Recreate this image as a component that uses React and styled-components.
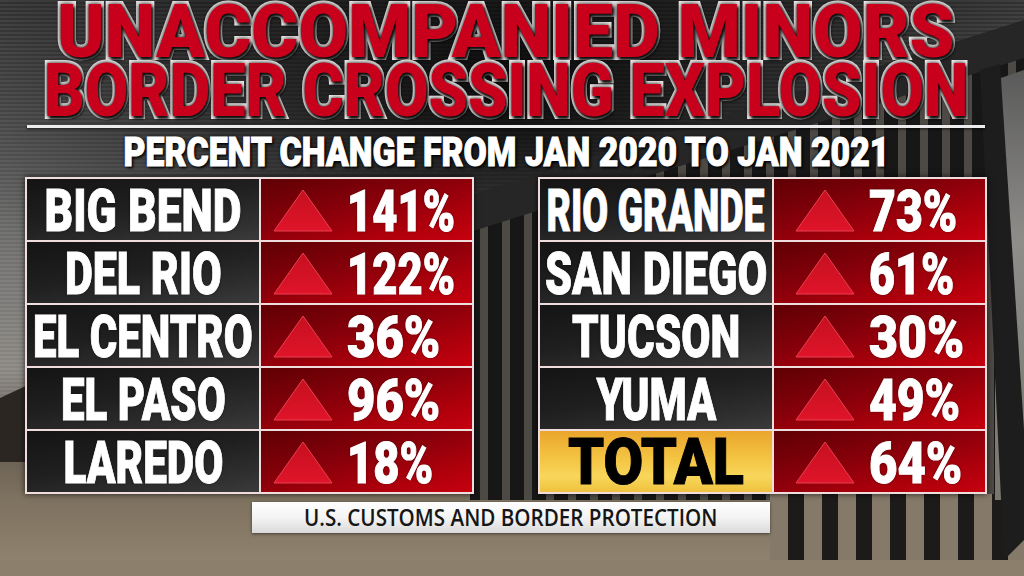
import React, { useLayoutEffect, useRef, useState } from 'react'
import styled, { createGlobalStyle } from 'styled-components'

const HEAVY = `Roboto, Inter, Lato, "DejaVu Sans", sans-serif`

const GlobalStyle = createGlobalStyle`
    html, body {
    margin: 0;
    padding: 0;
    background: #000;
    }

    body {
    width: 1024px;
    height: 576px;
    overflow: hidden;
    }
`

// widths are the pixel widths the broadcast squeezed each label into
const LEFT_ROWS = [
    { name: 'BIG BEND', nameWidth: 197, value: '141%', valueWidth: 108 },
    { name: 'DEL RIO', nameWidth: 157, value: '122%', valueWidth: 108 },
    { name: 'EL CENTRO', nameWidth: 220, value: '36%', valueWidth: 93 },
    { name: 'EL PASO', nameWidth: 165, value: '96%', valueWidth: 93 },
    { name: 'LAREDO', nameWidth: 160, value: '18%', valueWidth: 86 }
]

const RIGHT_ROWS = [
    { name: 'RIO GRANDE', nameWidth: 218, value: '73%', valueWidth: 88 },
    { name: 'SAN DIEGO', nameWidth: 222, value: '61%', valueWidth: 85 },
    { name: 'TUCSON', nameWidth: 168, value: '30%', valueWidth: 95 },
    { name: 'YUMA', nameWidth: 120, value: '49%', valueWidth: 91 },
    { name: 'TOTAL', nameWidth: 176, value: '64%', valueWidth: 93, total: true }
]

const Stage = styled.div`
    position: relative;
    width: 1024px;
    height: 576px;
    overflow: hidden;
    font-family: ${ HEAVY };
    font-weight: 900;
`

const Backdrop = styled.svg`
    position: absolute;
    inset: 0;
    width: 100%;
    height: 100%;
`

const Content = styled.div`
    position: relative;
    display: flex;
    flex-direction: column;
    width: 962px;
    margin-left: 25px;
    padding-top: 2px;
`

const FitText = styled.span`
    display: inline-block;
    white-space: nowrap;
    transform-origin: ${ p => p.$origin || 'center' };
`

const Fit = ({ width, sy = 1, origin, children }) => {
    const ref = useRef(null)
    const [sx, setSx] = useState(1)

    useLayoutEffect(() => {
        const measure = () => {
            const natural = ref.current && ref.current.offsetWidth
            if (natural) setSx(width / natural)
        }
        measure()
        if (document.fonts) document.fonts.ready.then(measure)
    }, [width])

    return (
        <FitText
            ref={ ref }
            $origin={ origin }
            style={ { transform: `scale(${ sx }, ${ sy })` } }>
            { children }
        </FitText>
    )
}

const TitleLine = styled.div`
    display: flex;
    justify-content: center;
    height: 59px;
    line-height: 59px;
    font-size: 74px;
    color: #c9001b;
    -webkit-text-stroke: 6px #f4eeee;
    paint-order: stroke fill;
    text-shadow: 0 0 5px #000, 2px 3px 3px rgba(0, 0, 0, 0.9);
`

const Rule = styled.div`
    width: 958px;
    height: 3px;
    margin: 5px 0 0 2px;
    background: #ececec;
    box-shadow: 0 1px 3px rgba(0, 0, 0, 0.7);
`

const Subtitle = styled.div`
    display: flex;
    justify-content: center;
    height: 48px;
    line-height: 48px;
    font-size: 41px;
    color: #fff;
    -webkit-text-stroke: 1px #fff;
    text-shadow: 0 0 4px #000, 2px 2px 3px #000;
`

const Tables = styled.div`
    display: flex;
    justify-content: space-between;
    margin-top: 1px;
`

const Table = styled.div`
    display: grid;
    grid-template-columns: 232px 211px;
    grid-auto-rows: 61px;
    gap: 2px;
    padding: 2px;
    background: #efdcdc;
    box-shadow: 0 0 6px rgba(0, 0, 0, 0.7);
`

const NameCell = styled.div`
    display: flex;
    align-items: center;
    justify-content: center;
    overflow: hidden;
    padding-top: 2px;
    line-height: 58px;
    font-size: ${ p => p.$total ? '64px' : '60px' };
    color: ${ p => p.$total ? '#000' : '#fff' };
    -webkit-text-stroke: 1px currentColor;
    text-shadow: ${ p => p.$total ? 'none' : '0 0 3px rgba(0, 0, 0, 0.8)' };
    background: ${ p => p.$total
        ? 'linear-gradient(180deg, #e9a62c 0%, #f4c443 45%, #f8d65a 75%, #efc13e 100%)'
        : 'linear-gradient(170deg, #141414 0%, #1f1f1f 45%, #2f2f2f 80%, #3b3b3b 100%)' };
`

const ValueCell = styled.div`
    display: flex;
    align-items: center;
    gap: 14px;
    padding: 2px 0 0 ${ p => p.$pad }px;
    overflow: hidden;
    line-height: 58px;
    font-size: 58px;
    color: #fff;
    -webkit-text-stroke: 1px #fff;
    text-shadow: 0 0 3px rgba(0, 0, 0, 0.6);
    background: linear-gradient(165deg, #5e0004 0%, #85000a 40%, #ad000c 75%, #c7000f 100%);
`

const Arrow = styled.svg`
    flex: none;
    width: 60px;
    height: 43px;
`

const Source = styled.div`
    display: flex;
    align-items: center;
    justify-content: center;
    width: 518px;
    height: 31px;
    margin: 8px 0 0 227px;
    background: linear-gradient(180deg, #ffffff 0%, #f4f4f4 50%, #d9d9d9 100%);
    box-shadow: 0 1px 3px rgba(0, 0, 0, 0.5);
    font-family: "Open Sans", "Liberation Sans", sans-serif;
    font-weight: 600;
    font-size: 23px;
    line-height: 31px;
    color: #161616;
`

const UpArrow = () => (
    <Arrow viewBox='0 0 60 43'>
        <defs>
            <linearGradient id='arrowFill' x1='0' y1='0' x2='0' y2='1'>
                <stop offset='0' stopColor='#c5101f' />
                <stop offset='1' stopColor='#e0142a' />
            </linearGradient>
        </defs>
        <polygon
            points='30,1 59,42 1,42'
            fill='url(#arrowFill)'
            stroke='#e8404e'
            strokeWidth='1' />
    </Arrow>
)

const Scene = () => (
    <Backdrop viewBox='0 0 1024 576' preserveAspectRatio='none'>
        <defs>
            <linearGradient id='sky' x1='0' y1='0' x2='0' y2='1'>
                <stop offset='0' stopColor='#333' />
                <stop offset='0.28' stopColor='#555' />
                <stop offset='0.45' stopColor='#727170' />
                <stop offset='0.64' stopColor='#8a8782' />
                <stop offset='0.76' stopColor='#625a4f' />
                <stop offset='0.86' stopColor='#7d715f' />
                <stop offset='1' stopColor='#938671' />
            </linearGradient>
            <pattern id='scan' width='4' height='4' patternUnits='userSpaceOnUse'>
                <rect width='4' height='2' fill='rgba(255,255,255,0.07)' />
            </pattern>
            <radialGradient id='shade' cx='0.5' cy='0.15' r='0.55'>
                <stop offset='0' stopColor='#000' stopOpacity='0.85' />
                <stop offset='1' stopColor='#000' stopOpacity='0' />
            </radialGradient>
            <pattern id='bars' width='22' height='10' patternUnits='userSpaceOnUse'>
                <rect width='22' height='10' fill='#4d4944' />
                <rect x='4' width='14' height='10' fill='#171717' />
            </pattern>
            <pattern id='lowBars' width='34' height='10' patternUnits='userSpaceOnUse'>
                <rect width='34' height='10' fill='#857a69' />
                <rect x='6' width='16' height='10' fill='#1c1b19' />
            </pattern>
            <linearGradient id='postLight' x1='0' y1='0' x2='0' y2='1'>
                <stop offset='0' stopColor='#5a5a5a' />
                <stop offset='0.4' stopColor='#8e8d8a' />
                <stop offset='1' stopColor='#7a766e' />
            </linearGradient>
        </defs>
        <rect width='1024' height='576' fill='url(#sky)' />
        <rect width='1024' height='420' fill='url(#scan)' />
        <rect width='1024' height='576' fill='url(#shade)' />
        <polygon points='0,398 30,384 30,462 0,462' fill='#2b2622' />
        <polygon points='470,215 1024,45 1024,500 470,500' fill='url(#bars)' />
        <rect x='770' y='494' width='254' height='66' fill='url(#lowBars)' />
        <polygon points='440,205 1024,20 1024,58 470,232' fill='#262626' />
        <polygon points='995,80 1024,70 1024,500 995,500' fill='url(#postLight)' />
        <polygon points='980,70 1000,64 1024,430 1024,540 1004,560' fill='#1d1d1d' />
        <rect x='0' y='560' width='1024' height='16' fill='#8c806c' />
    </Backdrop>
)

const DataTable = ({ rows, pad }) => (
    <Table>
        { rows.map(row => (
            <React.Fragment key={ row.name }>
                <NameCell $total={ row.total }>
                    <Fit width={ row.nameWidth }>{ row.name }</Fit>
                </NameCell>
                <ValueCell $pad={ pad }>
                    <UpArrow />
                    <Fit width={ row.valueWidth } origin='left center'>{ row.value }</Fit>
                </ValueCell>
            </React.Fragment>
        )) }
    </Table>
)

const App = () => (
    <Stage>
        <GlobalStyle />
        <Scene />
        <Content>
            <TitleLine>
                <Fit width={ 898 }>UNACCOMPANIED MINORS</Fit>
            </TitleLine>
            <TitleLine>
                <Fit width={ 924 }>BORDER CROSSING EXPLOSION</Fit>
            </TitleLine>
            <Rule />
            <Subtitle>
                <Fit width={ 766 }>PERCENT CHANGE FROM JAN 2020 TO JAN 2021</Fit>
            </Subtitle>
            <Tables>
                <DataTable rows={ LEFT_ROWS } pad={ 12 } />
                <DataTable rows={ RIGHT_ROWS } pad={ 21 } />
            </Tables>
            <Source>
                <Fit width={ 413 }>U.S. CUSTOMS AND BORDER PROTECTION</Fit>
            </Source>
        </Content>
    </Stage>
)

export default App
